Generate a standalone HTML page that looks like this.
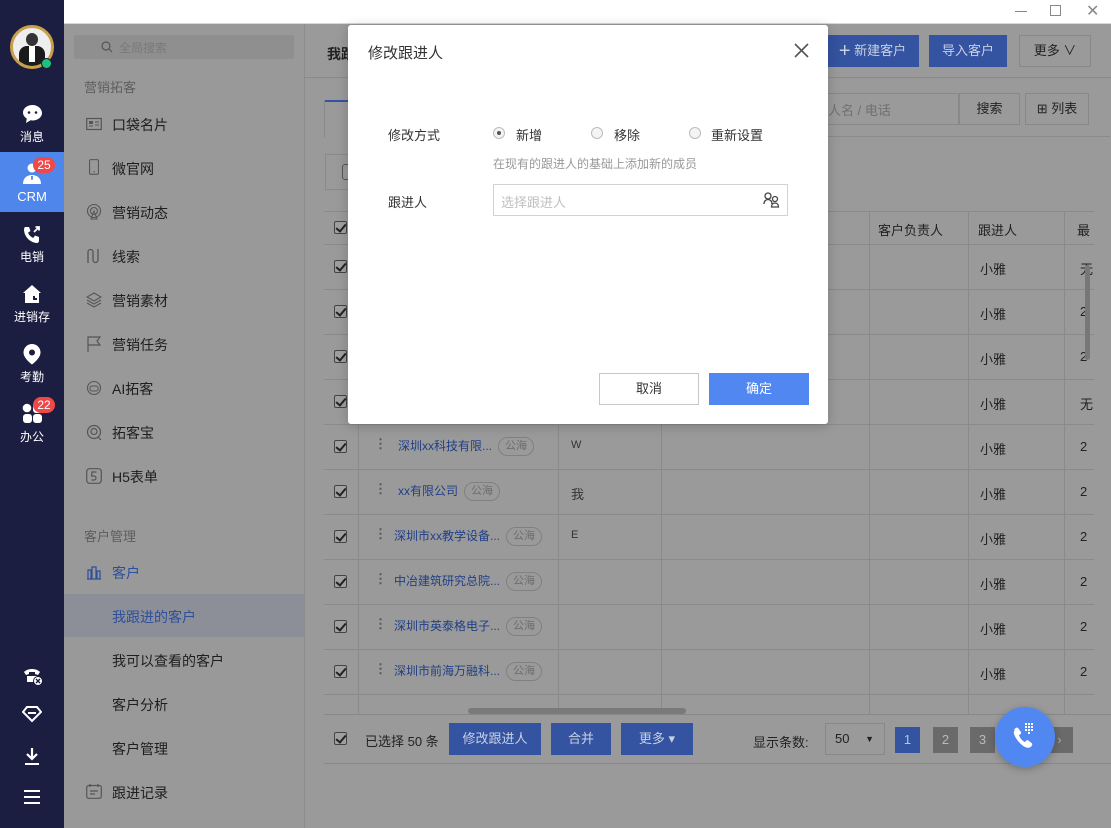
<!DOCTYPE html>
<html><head><meta charset="utf-8"><style>
*{margin:0;padding:0;box-sizing:border-box}
body{width:1111px;height:828px;overflow:hidden;position:relative;background:#999;font-family:"Liberation Sans","Noto Sans CJK SC",sans-serif;font-size:13px;color:#222}
.a{position:absolute}
.t{position:absolute;white-space:nowrap}
.nav{left:0;top:0;width:64px;height:828px;background:#1b1e40}
.nl{position:absolute;left:0;width:64px;text-align:center;color:#fff;font-size:12px}
.side{left:64px;top:24px;width:240px;height:804px;background:#999}
.si{position:absolute;left:112px;font-size:14px;color:#1e1e1e}
.ic{position:absolute;left:86px;width:16px;height:16px}
.cb{position:absolute;width:13px;height:13px;border:1px solid #444;border-radius:2px;background:#a0a0a0}
.cb:after{content:"";position:absolute;left:3px;top:0px;width:4px;height:8px;border:solid #222;border-width:0 2px 2px 0;transform:rotate(40deg)}
.hl{position:absolute;height:1px;background:#8a8a8a}
.vl{position:absolute;width:1px;background:#8a8a8a}
.btn{position:absolute;background:#3453a0;color:#c8d0e4;font-size:13px;text-align:center}
.tag{display:inline-block;border:1px solid #808080;border-radius:10px;font-size:11px;color:#6d6d6d;padding:0 6px;height:19px;line-height:17px;margin-left:6px;vertical-align:middle}
.name{color:#1f3f87;font-size:12px}
</style></head><body>
<!-- title bar -->
<div class="a" style="left:64px;top:0;width:1047px;height:24px;background:#fff;border-bottom:1px solid #d8d8d8"></div>
<div class="a" style="left:1015px;top:11px;width:12px;height:1px;background:#888"></div>
<div class="a" style="left:1050px;top:5px;width:11px;height:11px;border:1.5px solid #888"></div>
<div class="t" style="left:1086px;top:1px;font-size:16px;color:#888">✕</div>

<!-- nav -->
<div class="a nav"></div>
<div class="a" style="left:10px;top:25px;width:44px;height:44px;border-radius:50%;border:3px solid #c9a04a;background:#eee;overflow:hidden">
 <div class="a" style="left:13px;top:5px;width:12px;height:13px;border-radius:50%;background:#333"></div>
 <div class="a" style="left:6px;top:18px;width:26px;height:22px;border-radius:8px 8px 0 0;background:#1a1a1a"></div>
 <div class="a" style="left:16px;top:18px;width:6px;height:16px;background:#fff"></div>
</div>
<div class="a" style="left:41px;top:58px;width:11px;height:11px;border-radius:50%;background:#1fc07a;border:1.5px solid #1b1e40"></div>
<svg class="a" style="left:22px;top:104px" width="21" height="20" viewBox="0 0 21 20"><path d="M10.5 1C5 1 1 4.5 1 8.5c0 2.5 1.5 4.6 3.8 6L4 19l4.6-2.7c.6.1 1.2.2 1.9.2 5.5 0 9.5-3.5 9.5-7.5S16 1 10.5 1z" fill="#fff"/><circle cx="7" cy="8.5" r="1.3" fill="#1b1e40"/><circle cx="14" cy="8.5" r="1.3" fill="#1b1e40"/></svg>
<div class="nl" style="top:128px">消息</div>
<div class="a" style="left:0;top:152px;width:64px;height:60px;background:#4f86ec"></div>
<svg class="a" style="left:22px;top:163px" width="20" height="22" viewBox="0 0 20 22"><circle cx="10" cy="5" r="4.5" fill="#fff"/><path d="M1 21c0-6 4-9 9-9s9 3 9 9z" fill="#fff"/><path d="M9 13h2l-.3 4h-1.4z" fill="#4f86ec"/></svg>
<div class="a" style="left:33px;top:157px;width:22px;height:16px;border-radius:8px;background:#f04848;color:#fff;font-size:12px;text-align:center;line-height:16px">25</div>
<div class="nl" style="top:189px;font-size:13px">CRM</div>
<svg class="a" style="left:22px;top:225px" width="20" height="20" viewBox="0 0 20 20"><path d="M3 2l4 0 1.5 4-2.5 1.8c1 2.4 2.8 4.2 5.2 5.2L13 10.5l4 1.5v4c0 1-1 2-2 2C8 17.5 2.5 12 2 5c0-1 .5-3 1-3z" fill="#fff"/><path d="M12 7l5-5M13.5 2H17v3.5" stroke="#fff" stroke-width="1.8" fill="none"/></svg>
<div class="nl" style="top:248px">电销</div>
<svg class="a" style="left:22px;top:284px" width="20" height="20" viewBox="0 0 20 20"><path d="M10 1L1 9h2v10h14V9h2z" fill="#fff"/><rect x="11" y="12" width="2" height="2" fill="#1b1e40"/><rect x="13" y="14" width="2" height="2" fill="#1b1e40"/><rect x="11" y="14" width="2" height="2" fill="#1b1e40"/></svg>
<div class="nl" style="top:308px">进销存</div>
<svg class="a" style="left:22px;top:343px" width="20" height="22" viewBox="0 0 20 22"><path d="M10 1a8.5 8.5 0 0 0-8.5 8.5c0 6 8.5 12 8.5 12s8.5-6 8.5-12A8.5 8.5 0 0 0 10 1z" fill="#fff"/><circle cx="10" cy="9.5" r="3" fill="#1b1e40"/></svg>
<div class="nl" style="top:368px">考勤</div>
<svg class="a" style="left:22px;top:403px" width="21" height="21" viewBox="0 0 21 21"><circle cx="5" cy="5" r="4.3" fill="#fff"/><rect x="11" y="11" width="9" height="9" rx="3" fill="#fff"/><rect x="1" y="11" width="9" height="9" rx="3" fill="#fff"/><rect x="11" y="1" width="9" height="9" rx="3" fill="#fff"/></svg>
<div class="a" style="left:33px;top:397px;width:22px;height:16px;border-radius:8px;background:#f04848;color:#fff;font-size:12px;text-align:center;line-height:16px">22</div>
<div class="nl" style="top:428px">办公</div>
<svg class="a" style="left:22px;top:666px" width="22" height="20" viewBox="0 0 22 20"><path d="M2 6c4-4 12-4 16 0l-2 3-3-1V6H7v2L4 9z" fill="#fff"/><path d="M5 10h10v6H5z" fill="#fff"/><circle cx="16" cy="15" r="4.5" fill="#fff" stroke="#1b1e40" stroke-width="1"/><path d="M14 13l4 4M18 13l-4 4" stroke="#1b1e40" stroke-width="1.4"/></svg>
<svg class="a" style="left:22px;top:705px" width="20" height="18" viewBox="0 0 20 18"><path d="M5 2h10l4 5-9 9-9-9z" fill="none" stroke="#fff" stroke-width="2"/><path d="M6 8h8" stroke="#fff" stroke-width="2"/></svg>
<svg class="a" style="left:23px;top:747px" width="18" height="20" viewBox="0 0 18 20"><path d="M9 1v11M4 7l5 5 5-5" stroke="#fff" stroke-width="2.2" fill="none"/><path d="M2 17h14" stroke="#fff" stroke-width="2"/></svg>
<svg class="a" style="left:23px;top:789px" width="18" height="16" viewBox="0 0 18 16"><path d="M1 2h16M1 8h16M1 14h16" stroke="#fff" stroke-width="2"/></svg>

<!-- side panel -->
<div class="a side"></div>
<div class="a" style="left:74px;top:35px;width:220px;height:24px;background:#8f8f8f;border-radius:2px"></div>
<svg class="a" style="left:101px;top:41px" width="12" height="12" viewBox="0 0 12 12"><circle cx="5" cy="5" r="4" fill="none" stroke="#555" stroke-width="1.2"/><path d="M8 8l3 3" stroke="#555" stroke-width="1.2"/></svg>
<div class="t" style="left:119px;top:39px;font-size:12px;color:#7a7a7a">全局搜索</div>
<div class="t" style="left:84px;top:77px;font-size:13px;color:#5e5e5e">营销拓客</div>
<svg class="ic" style="top:116px" viewBox="0 0 16 16"><rect x="0.7" y="2.5" width="14.6" height="11" fill="none" stroke="#555" stroke-width="1.2"/><rect x="3" y="5" width="4" height="3" fill="#555"/><path d="M9 6h4M9 9h4M3 10h4" stroke="#555"/></svg>
<div class="si" style="top:115px">口袋名片</div>
<svg class="ic" style="top:159px" viewBox="0 0 16 18"><rect x="3" y="0.7" width="10" height="16.5" rx="1.5" fill="none" stroke="#555" stroke-width="1.2"/><circle cx="8" cy="14.5" r="0.8" fill="#555"/></svg>
<div class="si" style="top:159px">微官网</div>
<svg class="ic" style="top:204px" viewBox="0 0 16 16"><circle cx="8" cy="7" r="6.5" fill="none" stroke="#555" stroke-width="1.1"/><circle cx="8" cy="7" r="3.5" fill="none" stroke="#555" stroke-width="1.1"/><path d="M8 7l-3 8h6z" fill="none" stroke="#555"/></svg>
<div class="si" style="top:203px">营销动态</div>
<svg class="ic" style="top:248px" viewBox="0 0 16 16"><path d="M2 15V4a2.5 2.5 0 0 1 5 0v8a2.5 2.5 0 0 0 5 0V1" fill="none" stroke="#555" stroke-width="1.3"/></svg>
<div class="si" style="top:247px">线索</div>
<svg class="ic" style="top:292px" viewBox="0 0 16 16"><path d="M8 1l7 4-7 4-7-4zM1 8l7 4 7-4M1 11l7 4 7-4" fill="none" stroke="#555" stroke-width="1.1"/></svg>
<div class="si" style="top:291px">营销素材</div>
<svg class="ic" style="top:336px" viewBox="0 0 16 16"><path d="M2 16V1h12l-3 4 3 4H2" fill="none" stroke="#555" stroke-width="1.2"/></svg>
<div class="si" style="top:335px">营销任务</div>
<svg class="ic" style="top:380px" viewBox="0 0 16 16"><circle cx="8" cy="8" r="6.5" fill="none" stroke="#555" stroke-width="1.1"/><rect x="4" y="6" width="8" height="5" rx="2" fill="none" stroke="#555"/></svg>
<div class="si" style="top:379px">AI拓客</div>
<svg class="ic" style="top:424px" viewBox="0 0 16 16"><circle cx="8" cy="8" r="6.5" fill="none" stroke="#555" stroke-width="1.2"/><circle cx="8" cy="7.5" r="3" fill="none" stroke="#555" stroke-width="1.2"/><path d="M12 13l3 3" stroke="#555" stroke-width="1.2"/></svg>
<div class="si" style="top:423px">拓客宝</div>
<svg class="ic" style="top:468px" viewBox="0 0 16 16"><rect x="0.7" y="0.7" width="14.6" height="14.6" rx="3" fill="none" stroke="#555" stroke-width="1.2"/><path d="M10.5 4H6L5.5 8H8a2 2 0 0 1 0 4H5.5" fill="none" stroke="#555" stroke-width="1.2"/></svg>
<div class="si" style="top:467px">H5表单</div>
<div class="t" style="left:84px;top:526px;font-size:13px;color:#5e5e5e">客户管理</div>
<svg class="ic" style="top:564px" viewBox="0 0 16 16"><path d="M1 15h14M2 15V6h3v9M6 15V3h4v12M11 15V7h3v8" fill="none" stroke="#2e4f9a" stroke-width="1.2"/></svg>
<div class="si" style="top:563px;color:#2e4f9a">客户</div>
<div class="a" style="left:64px;top:594px;width:240px;height:43px;background:#8d8f98"></div>
<div class="si" style="top:607px;color:#2e4f9a">我跟进的客户</div>
<div class="si" style="top:651px">我可以查看的客户</div>
<div class="si" style="top:695px">客户分析</div>
<div class="si" style="top:739px">客户管理</div>
<svg class="ic" style="top:783px" viewBox="0 0 16 16"><rect x="0.7" y="2.5" width="14.6" height="12.8" rx="2" fill="none" stroke="#555" stroke-width="1.2"/><path d="M4 1v3M12 1v3M4 8h8M4 11h5" stroke="#555" stroke-width="1.2"/></svg>
<div class="si" style="top:783px">跟进记录</div>
<div class="a" style="left:296px;top:393px;width:20px;height:68px;background:#999;border-radius:0 8px 8px 0"></div>
<div class="t" style="left:304px;top:420px;font-size:8px;color:#555">◀</div>

<!-- main -->
<div class="a" style="left:304px;top:24px;width:807px;height:804px;background:#9a9a9a;border-left:1px solid #8c8c8c"></div>
<div class="hl" style="left:304px;top:77px;width:807px"></div>
<div class="t" style="left:327px;top:44px;font-size:14px;font-weight:bold;color:#222">我跟</div>
<div class="btn" style="left:826px;top:35px;width:93px;height:32px;line-height:32px"><span style="font-size:20px;vertical-align:-2px">+</span> 新建客户</div>
<div class="btn" style="left:929px;top:35px;width:78px;height:32px;line-height:32px">导入客户</div>
<div class="a" style="left:1019px;top:35px;width:72px;height:32px;border:1px solid #888;line-height:30px;text-align:center;color:#222">更多 ∨</div>
<div class="a" style="left:325px;top:100px;width:30px;height:2px;background:#3453a0"></div>
<div class="vl" style="left:324px;top:100px;height:38px"></div>
<div class="hl" style="left:660px;top:136px;width:450px"></div>
<div class="a" style="left:660px;top:93px;width:299px;height:32px;border:1px solid #888"></div>
<div class="t" style="left:815px;top:100px;font-size:13px;color:#707070">系人名 / 电话</div>
<div class="a" style="left:959px;top:93px;width:61px;height:32px;border:1px solid #888;line-height:30px;text-align:center;color:#222">搜索</div>
<div class="a" style="left:1025px;top:93px;width:64px;height:32px;border:1px solid #888;line-height:30px;text-align:center;color:#222">⊞ 列表</div>
<div class="a" style="left:325px;top:154px;width:300px;height:36px;border:1px solid #8a8a8a"></div>
<div class="a" style="left:342px;top:164px;width:10px;height:16px;border:1px solid #555;border-radius:3px"></div>

<!-- table -->
<div class="a" style="left:324px;top:211px;width:787px;height:503px;overflow:hidden">
</div>
<div class="hl" style="left:324px;top:211px;width:770px"></div>
<div class="hl" style="left:324px;top:244px;width:770px"></div>
<div class="hl" style="left:324px;top:289px;width:770px"></div>
<div class="hl" style="left:324px;top:334px;width:770px"></div>
<div class="hl" style="left:324px;top:379px;width:770px"></div>
<div class="hl" style="left:324px;top:424px;width:770px"></div>
<div class="hl" style="left:324px;top:469px;width:770px"></div>
<div class="hl" style="left:324px;top:514px;width:770px"></div>
<div class="hl" style="left:324px;top:559px;width:770px"></div>
<div class="hl" style="left:324px;top:604px;width:770px"></div>
<div class="hl" style="left:324px;top:649px;width:770px"></div>
<div class="hl" style="left:324px;top:694px;width:770px"></div>
<div class="vl" style="left:358px;top:211px;height:503px"></div>
<div class="vl" style="left:558px;top:211px;height:503px"></div>
<div class="vl" style="left:661px;top:211px;height:503px"></div>
<div class="vl" style="left:869px;top:211px;height:503px"></div>
<div class="vl" style="left:968px;top:211px;height:503px"></div>
<div class="vl" style="left:1064px;top:211px;height:503px"></div>
<div class="t" style="left:878px;top:220px;color:#222">客户负责人</div>
<div class="t" style="left:978px;top:220px;color:#222">跟进人</div>
<div class="t" style="left:1077px;top:220px;color:#222">最</div>
<div class="cb" style="left:334px;top:221px"></div>
<div class="cb" style="left:334px;top:260px"></div>
<div class="cb" style="left:334px;top:305px"></div>
<div class="cb" style="left:334px;top:350px"></div>
<div class="cb" style="left:334px;top:395px"></div>
<div class="cb" style="left:334px;top:440px"></div>
<div class="cb" style="left:334px;top:485px"></div>
<div class="cb" style="left:334px;top:530px"></div>
<div class="cb" style="left:334px;top:575px"></div>
<div class="cb" style="left:334px;top:620px"></div>
<div class="cb" style="left:334px;top:665px"></div>
<div class="t" style="left:980px;top:259px">小雅</div><div class="t" style="left:1080px;top:259px">无</div>
<div class="t" style="left:980px;top:304px">小雅</div><div class="t" style="left:1080px;top:304px">2</div>
<div class="t" style="left:980px;top:349px">小雅</div><div class="t" style="left:1080px;top:349px">2</div>
<div class="t" style="left:980px;top:394px">小雅</div><div class="t" style="left:1080px;top:394px">无</div>
<div class="t" style="left:980px;top:439px">小雅</div><div class="t" style="left:1080px;top:439px">2</div>
<div class="t" style="left:980px;top:484px">小雅</div><div class="t" style="left:1080px;top:484px">2</div>
<div class="t" style="left:980px;top:529px">小雅</div><div class="t" style="left:1080px;top:529px">2</div>
<div class="t" style="left:980px;top:574px">小雅</div><div class="t" style="left:1080px;top:574px">2</div>
<div class="t" style="left:980px;top:619px">小雅</div><div class="t" style="left:1080px;top:619px">2</div>
<div class="t" style="left:980px;top:664px">小雅</div><div class="t" style="left:1080px;top:664px">2</div>
<div class="t" style="left:374px;top:436px;color:#555;font-weight:bold">⋮</div>
<div class="t" style="left:398px;top:437px"><span class="name">深圳xx科技有限...</span><span class="tag">公海</span></div>
<div class="t" style="left:374px;top:481px;color:#555;font-weight:bold">⋮</div>
<div class="t" style="left:398px;top:482px"><span class="name">xx有限公司</span><span class="tag">公海</span></div>
<div class="t" style="left:374px;top:526px;color:#555;font-weight:bold">⋮</div>
<div class="t" style="left:394px;top:527px"><span class="name">深圳市xx教学设备...</span><span class="tag">公海</span></div>
<div class="t" style="left:374px;top:571px;color:#555;font-weight:bold">⋮</div>
<div class="t" style="left:394px;top:572px"><span class="name">中冶建筑研究总院...</span><span class="tag">公海</span></div>
<div class="t" style="left:374px;top:616px;color:#555;font-weight:bold">⋮</div>
<div class="t" style="left:394px;top:617px"><span class="name">深圳市英泰格电子...</span><span class="tag">公海</span></div>
<div class="t" style="left:374px;top:661px;color:#555;font-weight:bold">⋮</div>
<div class="t" style="left:394px;top:662px"><span class="name">深圳市前海万融科...</span><span class="tag">公海</span></div>
<div class="t" style="left:571px;top:439px;font-size:11px;color:#333">W</div>
<div class="t" style="left:571px;top:484px;color:#333">我</div>
<div class="t" style="left:571px;top:529px;font-size:11px;color:#333">E</div>
<div class="a" style="left:1085px;top:265px;width:5px;height:95px;border-radius:3px;background:#777"></div>
<div class="a" style="left:468px;top:708px;width:218px;height:6px;border-radius:3px;background:#7a7a7a"></div>

<!-- footer -->
<div class="a" style="left:324px;top:714px;width:787px;height:50px;background:#9a9a9a;border-top:1px solid #888;border-bottom:1px solid #888"></div>
<div class="cb" style="left:334px;top:732px"></div>
<div class="t" style="left:365px;top:731px;color:#222">已选择 50 条</div>
<div class="btn" style="left:449px;top:723px;width:92px;height:32px;line-height:32px">修改跟进人</div>
<div class="btn" style="left:551px;top:723px;width:60px;height:32px;line-height:32px">合并</div>
<div class="btn" style="left:621px;top:723px;width:72px;height:32px;line-height:32px">更多 ▾</div>
<div class="t" style="left:753px;top:732px;color:#222">显示条数:</div>
<div class="a" style="left:825px;top:723px;width:60px;height:32px;border:1px solid #888;line-height:30px;padding-left:9px;color:#222">50 <span style="position:absolute;right:10px;font-size:9px">▼</span></div>
<div class="a" style="left:895px;top:727px;width:25px;height:26px;background:#3453a0;color:#b8c4e0;text-align:center;line-height:26px">1</div>
<div class="a" style="left:933px;top:727px;width:25px;height:26px;background:#6a6a6a;color:#bbb;text-align:center;line-height:26px">2</div>
<div class="a" style="left:970px;top:727px;width:25px;height:26px;background:#6a6a6a;color:#bbb;text-align:center;line-height:26px">3</div>
<div class="a" style="left:1046px;top:727px;width:27px;height:26px;background:#6a6a6a;color:#aaa;text-align:center;line-height:26px">›</div>
<div class="a" style="left:995px;top:707px;width:60px;height:60px;border-radius:50%;background:#5087f0;box-shadow:0 2px 8px rgba(0,0,0,.25)"></div>
<svg class="a" style="left:1008px;top:720px" width="34" height="34" viewBox="0 0 34 34"><path d="M6 10c1-2 3-3 4-2l3 4c.5 1 0 2-1 2.5l-1 .6c1 3 3 5.5 6 7l.7-1c.6-1 1.6-1.3 2.5-.7l3.6 2.8c1 .8.4 2.8-1.5 4-2 1.2-5 .5-8-2-4-3.2-7-7.5-8.2-11-.5-1.5-.6-3 .9-4.2z" fill="#fff"/><g fill="#fff"><rect x="17" y="3" width="2" height="2"/><rect x="20" y="3" width="2" height="2"/><rect x="23" y="3" width="2" height="2"/><rect x="17" y="6" width="2" height="2"/><rect x="20" y="6" width="2" height="2"/><rect x="23" y="6" width="2" height="2"/><rect x="17" y="9" width="2" height="2"/><rect x="20" y="9" width="2" height="2"/><rect x="23" y="9" width="2" height="2"/><rect x="20" y="12" width="2" height="2"/></g></svg>

<!-- modal -->
<div class="a" style="left:348px;top:25px;width:480px;height:399px;background:#fff;border-radius:3px;box-shadow:0 2px 12px rgba(0,0,0,.2)"></div>
<div class="t" style="left:368px;top:42px;font-size:15px;color:#333">修改跟进人</div>
<svg class="a" style="left:794px;top:43px" width="15" height="15" viewBox="0 0 15 15"><path d="M1 1l13 13M14 1L1 14" stroke="#555" stroke-width="1.6"/></svg>
<div class="t" style="left:388px;top:125px;font-size:13px;color:#333">修改方式</div>
<div class="a" style="left:493px;top:127px;width:12px;height:12px;border-radius:50%;border:1px solid #bbb;background:#f4f4f4"></div>
<div class="a" style="left:497px;top:131px;width:4px;height:4px;border-radius:50%;background:#555"></div>
<div class="t" style="left:516px;top:125px;color:#333">新增</div>
<div class="a" style="left:591px;top:127px;width:12px;height:12px;border-radius:50%;border:1px solid #bbb;background:#f4f4f4"></div>
<div class="t" style="left:614px;top:125px;color:#333">移除</div>
<div class="a" style="left:689px;top:127px;width:12px;height:12px;border-radius:50%;border:1px solid #bbb;background:#f4f4f4"></div>
<div class="t" style="left:711px;top:125px;color:#333">重新设置</div>
<div class="t" style="left:493px;top:155px;font-size:12px;color:#999">在现有的跟进人的基础上添加新的成员</div>
<div class="t" style="left:388px;top:192px;color:#333">跟进人</div>
<div class="a" style="left:493px;top:184px;width:295px;height:32px;border:1px solid #d2d2d2"></div>
<div class="t" style="left:501px;top:192px;color:#c0c0c0">选择跟进人</div>
<svg class="a" style="left:763px;top:192px" width="17" height="16" viewBox="0 0 17 16"><circle cx="5" cy="4" r="3" fill="none" stroke="#444" stroke-width="1.3"/><path d="M1 12c0-3 2-4.5 4-4.5s4 1.5 4 4.5" fill="none" stroke="#444" stroke-width="1.3"/><circle cx="12" cy="7" r="2.5" fill="none" stroke="#444" stroke-width="1.3"/><path d="M8.5 15c0-2.5 1.5-4 3.5-4s3.5 1.5 3.5 4z" fill="none" stroke="#444" stroke-width="1.3"/></svg>
<div class="a" style="left:599px;top:373px;width:100px;height:32px;border:1px solid #c8c8c8;text-align:center;line-height:30px;color:#333">取消</div>
<div class="a" style="left:709px;top:373px;width:100px;height:32px;background:#5087f0;text-align:center;line-height:32px;color:#fff">确定</div>
</body></html>
